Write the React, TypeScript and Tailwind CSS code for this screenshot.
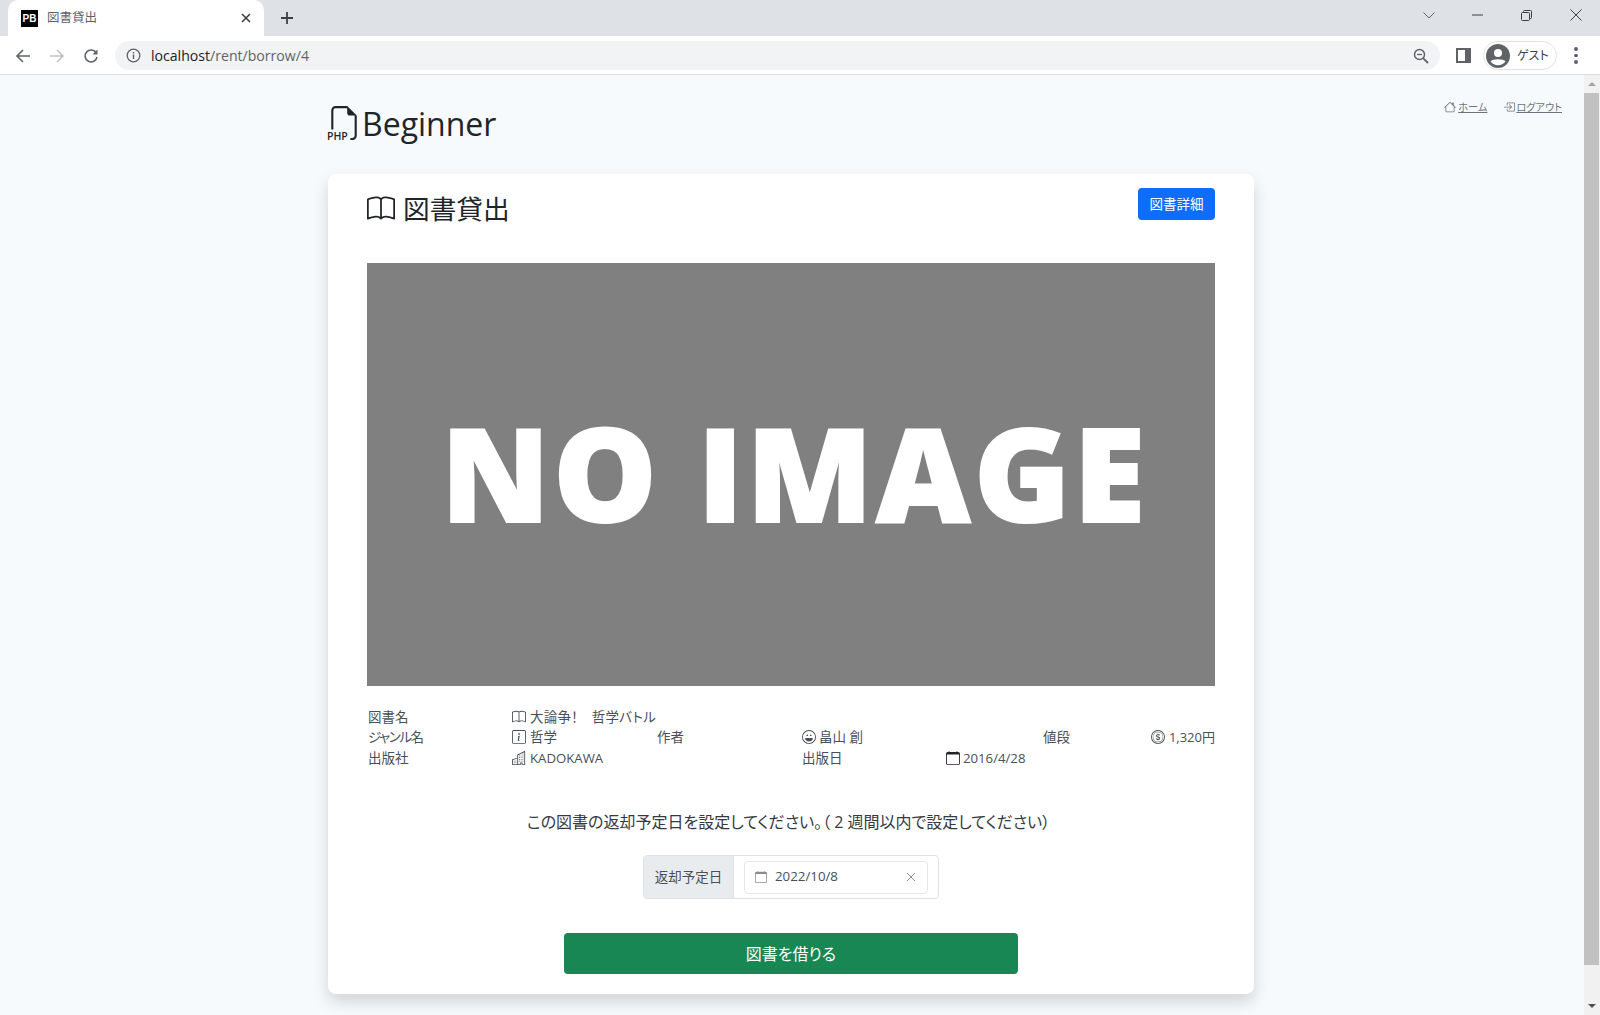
import React from "react";
import {
  BsBook,
  BsInfoSquare,
  BsEmojiLaughing,
  BsBuildings,
  BsCoin,
  BsCalendar,
  BsHouse,
  BsBoxArrowInRight,
} from "react-icons/bs";

const jp = "font-['Open_Sans','Noto_Sans_CJK_JP',sans-serif] [font-feature-settings:'palt']";

function ChromeTab() {
  return (
    <div className="h-9 bg-[#dee1e6] flex items-end shrink-0">
      <div className="relative ml-2 w-[256px] h-[36px] bg-white rounded-t-[10px] flex items-center pl-[13px] pr-[12px]">
        <div className="w-[17px] h-[17px] bg-black text-white text-[10px] leading-[17px] font-bold text-center font-['Liberation_Sans',sans-serif]">
          PB
        </div>
        <span className="ml-[9px] text-[12.500px] text-[#5f6368]">図書貸出</span>
        <svg className="ml-auto" width="12" height="12" viewBox="0 0 12 12">
          <path d="M2 2l8 8M10 2l-8 8" stroke="#3c4043" strokeWidth="1.6" />
        </svg>
      </div>
      <div className="w-[34px] h-[36px] ml-[6px] flex items-center justify-center">
        <svg width="14" height="14" viewBox="0 0 14 14">
          <path d="M7 1v12M1 7h12" stroke="#3c4043" strokeWidth="1.8" />
        </svg>
      </div>
      <div className="ml-auto flex items-center h-[30px] self-start text-[#3c4043]">
        <svg width="12" height="7" viewBox="0 0 12 7">
          <path d="M.5.5 6 6 11.5.5" fill="none" stroke="#5f6368" />
        </svg>
        <svg width="11" height="2" viewBox="0 0 11 2" className="ml-[37px]">
          <path d="M0 1h11" stroke="#3c4043" />
        </svg>
        <svg width="11" height="11" viewBox="0 0 11 11" className="ml-[38px]">
          <path d="M.5 3.5a1 1 0 0 1 1-1h6a1 1 0 0 1 1 1v6a1 1 0 0 1-1 1h-6a1 1 0 0 1-1-1zM2.5 2.5v-1a1 1 0 0 1 1-1h6a1 1 0 0 1 1 1v6a1 1 0 0 1-1 1h-1" fill="none" stroke="#3c4043" />
        </svg>
        <svg width="12" height="12" viewBox="0 0 12 12" className="ml-[38px] mr-[18px]">
          <path d="M.5.5l11 11M11.5.5l-11 11" stroke="#3c4043" />
        </svg>
      </div>
    </div>
  );
}

function ChromeToolbar() {
  return (
    <div className="h-[39px] pt-[1px] bg-white border-b border-[#dadce0] flex items-center shrink-0">
      <svg width="16" height="16" viewBox="0 0 16 16" className="ml-[15px]">
        <path d="M15 8H2M8 2 2 8l6 6" fill="none" stroke="#5f6368" strokeWidth="1.6" />
      </svg>
      <svg width="16" height="16" viewBox="0 0 16 16" className="ml-[18px]">
        <path d="M1 8h13M8 2l6 6-6 6" fill="none" stroke="#bdc1c6" strokeWidth="1.6" />
      </svg>
      <svg width="16" height="16" viewBox="0 0 16 16" className="ml-[18px]">
        <path d="M13.3 5A6 6 0 1 0 14 9" fill="none" stroke="#5f6368" strokeWidth="1.6" />
        <path d="M14.5 1.5v5h-5z" fill="#5f6368" />
      </svg>
      <div className="ml-[16px] w-[1325px] h-[29px] bg-[#f1f3f4] rounded-full flex items-center pl-[11px] pr-[11px]">
        <svg width="15" height="15" viewBox="0 0 15 15">
          <circle cx="7.5" cy="7.5" r="6.3" fill="none" stroke="#5f6368" strokeWidth="1.3" />
          <path d="M7.5 6.6v4.4M7.5 4v1.5" stroke="#5f6368" strokeWidth="1.4" />
        </svg>
        <span className="ml-[10px] text-[14.1px] text-[#202124]">
          localhost<span className="text-[#5f6368]">/rent/borrow/4</span>
        </span>
        <svg width="16" height="16" viewBox="0 0 16 16" className="ml-auto">
          <circle cx="6.5" cy="6.5" r="5" fill="none" stroke="#5f6368" strokeWidth="1.5" />
          <path d="M10.3 10.3 15 15" stroke="#5f6368" strokeWidth="1.8" />
          <path d="M4 6.5h5" stroke="#5f6368" strokeWidth="1.3" />
        </svg>
      </div>
      <div className="ml-[16px] w-[15px] h-[15px] border-[2px] border-[#5f6368] border-r-[6px]" />
      <div className="ml-[12px] w-[74px] h-[29px] rounded-full border border-[#dfe1e5] flex items-center pl-[2px]">
        <svg width="24" height="24" viewBox="0 0 24 24">
          <circle cx="12" cy="12" r="12" fill="#5f6368" />
          <circle cx="12" cy="9" r="4" fill="#fff" />
          <path d="M4.5 17.5c2-3 12.800-3 15 0a9.500 9.500 0 0 1-15 0z" fill="#fff" />
        </svg>
        <span className="ml-[7px] text-[12px] text-[#3c4043]">ゲスト</span>
      </div>
      <div className="ml-[17px] flex flex-col gap-[3px]">
        <span className="w-[3.500px] h-[3.500px] rounded-full bg-[#5f6368]" />
        <span className="w-[3.500px] h-[3.500px] rounded-full bg-[#5f6368]" />
        <span className="w-[3.500px] h-[3.500px] rounded-full bg-[#5f6368]" />
      </div>
    </div>
  );
}

function Scrollbar() {
  return (
    <div className="w-4 bg-[#f1f1f1] flex flex-col items-start shrink-0">
      <div className="w-[15px] h-[18px] flex items-center justify-center">
        <div className="w-0 h-0 border-x-[4px] border-x-transparent border-b-[4px] border-b-[#a3a3a3]" />
      </div>
      <div className="w-[15px] h-[872px] bg-[#c1c1c1]" />
      <div className="flex-1" />
      <div className="w-[15px] h-[18px] flex items-center justify-center">
        <div className="w-0 h-0 border-x-[4px] border-x-transparent border-t-[4px] border-t-[#505050]" />
      </div>
    </div>
  );
}

function PageHeader() {
  return (
    <div className="h-[99px] flex items-start">
      <div className="ml-[327px] mt-[29px] flex items-center">
        <div className="relative w-[31px] h-[36px]">
          <svg width="34" height="34" viewBox="0 0 16 16" className="absolute left-0 top-0" fill="#212529">
            <path d="M14 4.5V14a2 2 0 0 1-2 2h-1v-1h1a1 1 0 0 0 1-1V4.5h-2A1.500 1.500 0 0 1 9.500 3V1H4a1 1 0 0 0-1 1v9H2V2a2 2 0 0 1 2-2h5.500L14 4.500Z" />
          </svg>
          <span className="absolute left-0 top-[24px] text-[10.500px] leading-[12px] font-semibold text-[#212529] font-['Open_Sans',sans-serif]">
            PHP
          </span>
        </div>
        <span className="ml-[4px] text-[32px] leading-[40px] text-[#212529]">Beginner</span>
      </div>
      <div className="ml-auto mr-[22px] mt-[23px] flex gap-[16px] text-[10.200px] leading-[18px] text-[#6c757d]">
        <a className="flex items-center underline">
          <BsHouse className="mr-[2px] w-[12px] h-[12px]" />
          ホーム
        </a>
        <a className="flex items-center underline">
          <BsBoxArrowInRight className="mr-[1px] w-[12px] h-[12px]" />
          ログアウト
        </a>
      </div>
    </div>
  );
}

function BookInfo() {
  return (
    <div className="mt-[20.500px] pl-[1px] grid grid-cols-[144px_145px_145px_144px_97px_1fr] text-[13.500px] leading-[20.500px] text-[#495057]">
      <div>図書名</div>
      <div className="col-span-5 flex items-center tracking-[0.200px]">
        <BsBook className="w-[14px] h-[14px] mr-[4px]" />
        大論争！　哲学バトル
      </div>
      <div className="tracking-[-1.400px]">ジャンル名</div>
      <div className="flex items-center">
        <BsInfoSquare className="w-[14px] h-[14px] mr-[4px]" />
        哲学
      </div>
      <div>作者</div>
      <div className="col-span-2 flex items-center">
        <BsEmojiLaughing className="w-[14px] h-[14px] mr-[3px]" />
        畠山 創
      </div>
      <div className="flex items-center justify-between">
        <span>値段</span>
        <span className="flex items-center text-[13px]">
          <BsCoin className="w-[14px] h-[14px] mr-[4px]" />
          1,320円
        </span>
      </div>
      <div>出版社</div>
      <div className="col-span-2 flex items-center text-[13.200px]">
        <BsBuildings className="w-[14px] h-[14px] mr-[4px]" />
        KADOKAWA
      </div>
      <div>出版日</div>
      <div className="col-span-2 flex items-center text-[13.200px]">
        <BsCalendar className="w-[14px] h-[14px] mr-[3px] text-[#212529]" />
        2016/4/28
      </div>
    </div>
  );
}

export default function App() {
  return (
    <div className={`h-screen overflow-hidden flex flex-col bg-[#f7fafc] ${jp}`}>
      <ChromeTab />
      <ChromeToolbar />
      <div className="flex-1 flex min-h-0">
        <div className="flex-1 min-w-0">
          <PageHeader />
          <div className="ml-[328px] w-[926px] h-[820px] bg-white rounded-[8px] shadow-[0_8px_16px_rgba(0,0,0,0.15)] px-[39px] pt-[14px]">
            <div className="flex items-start justify-between h-[75px]">
              <h3 className="flex items-center text-[26.700px] leading-[42px] text-[#212529]">
                <BsBook className="w-[28px] h-[28px] mr-[8px]" />
                図書貸出
              </h3>
              <button className="w-[77px] h-[32px] bg-[#0d6efd] text-white text-[13.500px] rounded-[4px]">
                図書詳細
              </button>
            </div>
            <div className="h-[423px] bg-[#808080] flex items-center justify-center">
              <span className="text-white font-extrabold text-[130px] leading-none tracking-[3.600px] [-webkit-text-stroke:2px_white] font-['Open_Sans',sans-serif] -mt-[5px] ml-[8px]">
                NO IMAGE
              </span>
            </div>
            <BookInfo />
            <p className="mt-[42px] pr-[5px] text-center text-base leading-[24px] text-[#343a40]">
              この図書の返却予定日を設定してください。（ 2 週間以内で設定してください）
            </p>
            <div className="mt-[21px] flex justify-center">
              <div className="h-[44px] flex border border-[#dee2e6] rounded-[4px] w-[296px]">
                <div className="w-[90px] bg-[#e9ecef] border-r border-[#dee2e6] flex items-center justify-center text-[13.500px] text-[#495057] rounded-l-[4px]">
                  返却予定日
                </div>
                <div className="flex-1 flex items-center px-[10px]">
                  <div className="w-full h-[33px] border border-[#e4e7ea] rounded-[4px] flex items-center pl-[10px] pr-[11px] text-[13.300px] text-[#495057]">
                    <BsCalendar className="w-[12px] h-[12px] text-[#8c8c8c] mr-[8px]" />
                    2022/10/8
                    <svg width="10" height="10" viewBox="0 0 10 10" className="ml-auto">
                      <path d="M1 1l8 8M9 1 1 9" stroke="#8c8c8c" />
                    </svg>
                  </div>
                </div>
              </div>
            </div>
            <div className="mt-[34px] flex justify-center">
              <button className="w-[454px] h-[41px] bg-[#198754] text-white text-base rounded-[4px]">
                図書を借りる
              </button>
            </div>
          </div>
        </div>
        <Scrollbar />
      </div>
    </div>
  );
}
